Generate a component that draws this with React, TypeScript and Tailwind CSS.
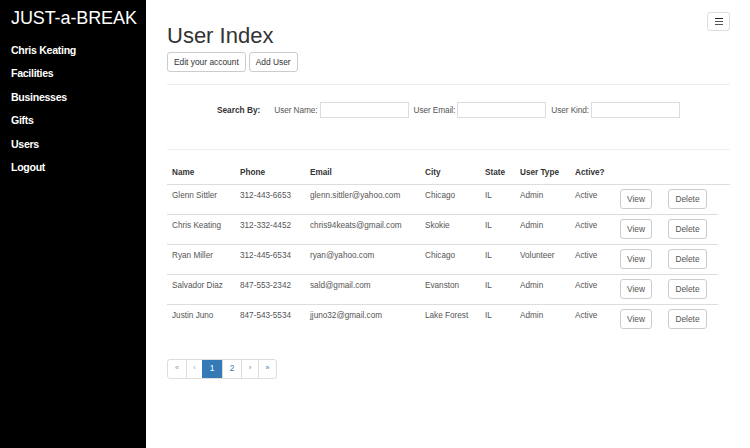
import React from "react";

const NAV = ["Chris Keating", "Facilities", "Businesses", "Gifts", "Users", "Logout"];

const USERS = [
  { name: "Glenn Sittler", phone: "312-443-6653", email: "glenn.sittler@yahoo.com", city: "Chicago", state: "IL", kind: "Admin" },
  { name: "Chris Keating", phone: "312-332-4452", email: "chris94keats@gmail.com", city: "Skokie", state: "IL", kind: "Admin" },
  { name: "Ryan Miller", phone: "312-445-6534", email: "ryan@yahoo.com", city: "Chicago", state: "IL", kind: "Volunteer" },
  { name: "Salvador Diaz", phone: "847-553-2342", email: "sald@gmail.com", city: "Evanston", state: "IL", kind: "Admin" },
  { name: "Justin Juno", phone: "847-543-5534", email: "jjuno32@gmail.com", city: "Lake Forest", state: "IL", kind: "Admin" },
];

const btn = "h-[20px] rounded-[3px] border border-[#ccc] bg-white px-[6px] text-[8.4px] text-[#333] leading-none";

function SearchField({ label }: { label: string }) {
  return (
    <label className="flex items-center gap-[2px] text-[8.3px] tracking-[-0.1px] text-[#555]">
      {label}
      <input className="h-[16px] w-[89px] border border-[#ddd] bg-white" />
    </label>
  );
}

export default function App() {
  return (
    <div className="flex min-h-[448px] bg-white text-[#333]" style={{ fontFamily: '"Liberation Sans", Arial, sans-serif' }}>
      <aside className="w-[146px] shrink-0 bg-black pl-[11px] pt-[6px] text-white">
        <div className="whitespace-nowrap text-[18px] leading-[24px] tracking-[-0.1px]">JUST-a-BREAK</div>
        <nav className="mt-[8.5px] flex flex-col">
          {NAV.map((n) => (
            <a key={n} className="h-[23.5px] whitespace-nowrap text-[10.6px] font-bold leading-[23.5px] tracking-[-0.3px]">{n}</a>
          ))}
        </nav>
      </aside>

      <main className="flex-1 pl-[21px] pr-[20px] pt-[12px]">
        <div className="flex items-start justify-between">
          <div>
            <h1 className="mt-[11px] text-[22px] leading-[26px]">User Index</h1>
            <div className="mt-[3px] flex gap-[3px]">
              <button className={btn}>Edit your account</button>
              <button className={btn}>Add User</button>
            </div>
          </div>
          <button className="flex h-[19px] w-[23px] flex-col items-center justify-center gap-[1.5px] rounded-[3px] border border-[#ddd] bg-white">
            <span className="h-[1.5px] w-[8px] bg-[#222]" />
            <span className="h-[1.5px] w-[8px] bg-[#555]" />
            <span className="h-[1.5px] w-[8px] bg-[#555]" />
          </button>
        </div>

        <hr className="mt-[12px] border-[#eee]" />

        <div className="flex h-[52px] items-center justify-center pb-[2px]">
          <span className="mr-[14px] text-[8.3px] font-bold text-[#333]">Search By:</span>
          <div className="flex items-center gap-[5px]">
            <SearchField label="User Name:" />
            <SearchField label="User Email:" />
            <SearchField label="User Kind:" />
          </div>
        </div>

        <hr className="mt-[12px] border-[#eee]" />

        <table className="mt-[12px] w-full table-fixed border-collapse text-left text-[8.2px]">
          <thead>
            <tr className="border-b-[1.5px] border-[#ddd]">
              {[
                ["Name", "w-[68px]"],
                ["Phone", "w-[70px]"],
                ["Email", "w-[115px]"],
                ["City", "w-[60px]"],
                ["State", "w-[35px]"],
                ["User Type", "w-[55px]"],
                ["Active?", "w-[45px]"],
                ["", "w-[48px]"],
                ["", "w-[55px]"],
                ["", ""],
              ].map(([h, w], i) => (
                <th key={i} className={`${w} px-[5px] pb-[5px] pt-[5px] align-bottom font-bold leading-[12px] text-[#333]`}>{h}</th>
              ))}
            </tr>
          </thead>
          <tbody className="text-[#555]">
            {USERS.map((u) => (
              <tr key={u.name} className="h-[30px]">
                {[u.name, u.phone, u.email, u.city, u.state, u.kind, "Active"].map((c, i) => (
                  <td key={i} className="border-t border-[#ddd] px-[5px] pt-[5px] align-top leading-[12px]">{c}</td>
                ))}
                <td className="border-t border-[#ddd] px-[5px] pt-[4px] align-top">
                  <button className={`${btn} w-[32px] px-0 text-[#555]`}>View</button>
                </td>
                <td className="border-t border-[#ddd] px-[5px] pt-[4px] align-top">
                  <button className={`${btn} w-[39px] px-0 text-[#555]`}>Delete</button>
                </td>
              </tr>
            ))}
          </tbody>
        </table>

        <div className="mt-[24px] inline-flex h-[20px] rounded-[3px] border border-[#ddd] text-[7px] text-[#337ab7]">
          <span className="flex w-[18px] items-center justify-center text-[#999]">«</span>
          <span className="flex w-[16px] items-center justify-center border-l border-[#ddd] text-[#999]">‹</span>
          <span className="flex w-[20px] items-center justify-center bg-[#337ab7] text-[8.4px] text-white">1</span>
          <span className="flex w-[19px] items-center justify-center border-l border-[#ddd] text-[8.4px]">2</span>
          <span className="flex w-[17px] items-center justify-center border-l border-[#ddd]">›</span>
          <span className="flex w-[18px] items-center justify-center border-l border-[#ddd]">»</span>
        </div>
      </main>
    </div>
  );
}
